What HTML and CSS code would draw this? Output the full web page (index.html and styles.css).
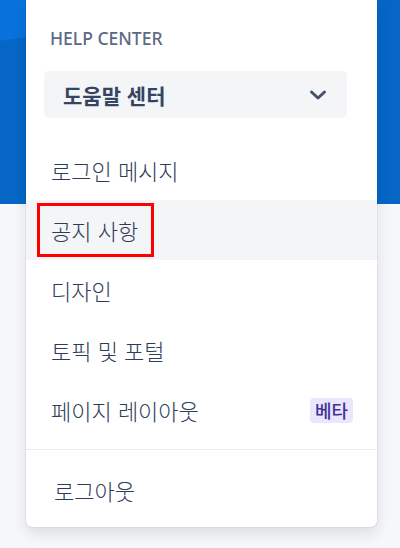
FILE: index.html
```html
<!DOCTYPE html>
<html lang="ko">
<head>
<meta charset="utf-8">
<link rel="stylesheet" href="styles.css">
</head>
<body>
<div class="page">
  <div class="panel">
    <div class="label">HELP CENTER</div>
    <div class="select">
      <span class="select-text">도움말 센터</span>
      <svg class="chev" width="18" height="12" viewBox="0 0 18 12"><path d="M2.5 3 L9 9 L15.5 3" fill="none" stroke="#42526e" stroke-width="3" stroke-linecap="round" stroke-linejoin="round"/></svg>
    </div>
    <ul class="menu">
      <li class="item">로그인 메시지</li>
      <li class="item active"><span class="annot">공지 사항</span></li>
      <li class="item">디자인</li>
      <li class="item">토픽 및 포털</li>
      <li class="item">페이지 레이아웃<span class="badge">베타</span></li>
    </ul>
    <div class="footer">
      <div class="item logout">로그아웃</div>
    </div>
  </div>
</div>
</body>
</html>
```

FILE: styles.css
```css
html, body {
  margin: 0;
  padding: 0;
}
body {
  width: 400px;
  height: 548px;
  overflow: hidden;
  font-family: "Noto Sans", "Noto Sans CJK KR", sans-serif;
  background:
    linear-gradient(172deg, #0872da 0, #0872da 40px, rgba(0,0,0,0) 41px),
    linear-gradient(to bottom, #0566c6 0, #0566c6 204px, #f6f7f9 204px, #f6f7f9 100%);
}
.page {
  padding-left: 26px;
}
.panel {
  width: 351px;
  background: #fff;
  border-radius: 0 0 6px 6px;
  box-shadow: 0 6px 14px rgba(9, 30, 66, 0.12), 0 0 1px rgba(9, 30, 66, 0.35);
}
.label {
  height: 71px;
  box-sizing: border-box;
  padding: 26px 0 0 24px;
  font-size: 17.5px;
  line-height: 24px;
  font-weight: 500;
  color: #5b6986;
}
.select {
  margin: 0 30px 0 18px;
  height: 47px;
  background: #f4f5f7;
  border-radius: 5px;
  display: flex;
  align-items: center;
  justify-content: space-between;
  padding: 0 20px 0 19px;
}
.select-text {
  font-family: "Noto Sans CJK KR", sans-serif;
  font-size: 21px;
  font-weight: 700;
  color: #344563;
}
.chev {
  display: block;
}
.menu {
  list-style: none;
  margin: 22px 0 0 0;
  padding: 0 0 9px 0;
  border-bottom: 1px solid #ebecf0;
}
.item {
  height: 60px;
  display: flex;
  align-items: center;
  justify-content: space-between;
  padding: 0 24px 0 25px;
  font-family: "Noto Sans CJK KR", sans-serif;
  font-size: 22px;
  font-weight: 300;
  color: #2d3c58;
}
.item.active {
  background: #f4f5f7;
}
.annot {
  display: flex;
  align-items: center;
  height: 54px;
  box-sizing: border-box;
  margin-left: -14px;
  padding: 0 13px 0 11px;
  border: 3px solid #ff0000;
}
.badge {
  font-size: 18px;
  font-weight: 500;
  color: #403294;
  background: #eae6ff;
  border-radius: 4px;
  padding: 0 5px;
  height: 25px;
  line-height: 25px;
}
.footer {
  padding: 10px 0 7px 0;
}
.logout {
  padding-left: 28px;
}
```
